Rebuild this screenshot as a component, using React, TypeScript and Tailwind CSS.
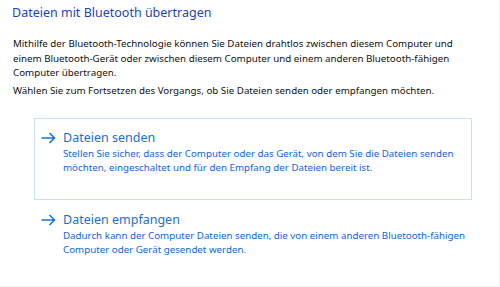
import React from "react";

type LinkProps = {
    title: string;
    lines: string[];
    selected?: boolean;
};

const Arrow = () => (
    <svg width="15" height="12" viewBox="0 0 15 12" className="shrink-0">
        <path d="M0.5 6 H13.5 M8.5 1 L13.5 6 L8.5 11" fill="none" stroke="#1c74d4" strokeWidth="1.6" />
    </svg>
);

const CommandLink: React.FC<LinkProps> = ({ title, lines, selected }) => {
    return (
        <div
            className={
                selected
                    ? "ml-[34px] w-[438px] h-[82px] border border-[#c7e0f4] pl-[6px] pt-[10px]"
                    : "ml-[34px] w-[438px] h-[82px] border border-transparent pl-[6px] pt-[10px]"
            }
        >
            <div className="flex flex-row items-center gap-[7px] h-[18px]">
                <Arrow />
                <span className="text-[12.5px] leading-[18px] text-[#1c6fc9]">{title}</span>
            </div>
            <div className="pl-[22px] text-[9.75px] leading-[14px] text-[#1166cc]">
                {lines.map((line, i) => (
                    <div key={i} className="whitespace-nowrap">{line}</div>
                ))}
            </div>
        </div>
    );
};

export default function App() {
    return (
        <div
            className="w-[500px] h-[287px] bg-white border-r border-b border-[#f0f0f0] overflow-hidden"
            style={{ fontFamily: '"Noto Sans", "Liberation Sans", sans-serif' }}
        >
            <h1 className="pl-[12px] pt-[3px] text-[12.5px] leading-[20px] text-[#1f45b0]">
                Dateien mit Bluetooth übertragen
            </h1>
            <div className="pl-[13px] pt-[14px] text-[9.75px] leading-[14.5px] text-[#111]">
                <div className="whitespace-nowrap">Mithilfe der Bluetooth-Technologie können Sie Dateien drahtlos zwischen diesem Computer und</div>
                <div className="whitespace-nowrap">einem Bluetooth-Gerät oder zwischen diesem Computer und einem anderen Bluetooth-fähigen</div>
                <div className="whitespace-nowrap">Computer übertragen.</div>
                <div className="whitespace-nowrap mt-[3px]">Wählen Sie zum Fortsetzen des Vorgangs, ob Sie Dateien senden oder empfangen möchten.</div>
            </div>
            <div className="mt-[20px] flex flex-col">
                <CommandLink
                    selected
                    title="Dateien senden"
                    lines={[
                        "Stellen Sie sicher, dass der Computer oder das Gerät, von dem Sie die Dateien senden",
                        "möchten, eingeschaltet und für den Empfang der Dateien bereit ist.",
                    ]}
                />
                <CommandLink
                    title="Dateien empfangen"
                    lines={[
                        "Dadurch kann der Computer Dateien senden, die von einem anderen Bluetooth-fähigen",
                        "Computer oder Gerät gesendet werden.",
                    ]}
                />
            </div>
        </div>
    );
}
